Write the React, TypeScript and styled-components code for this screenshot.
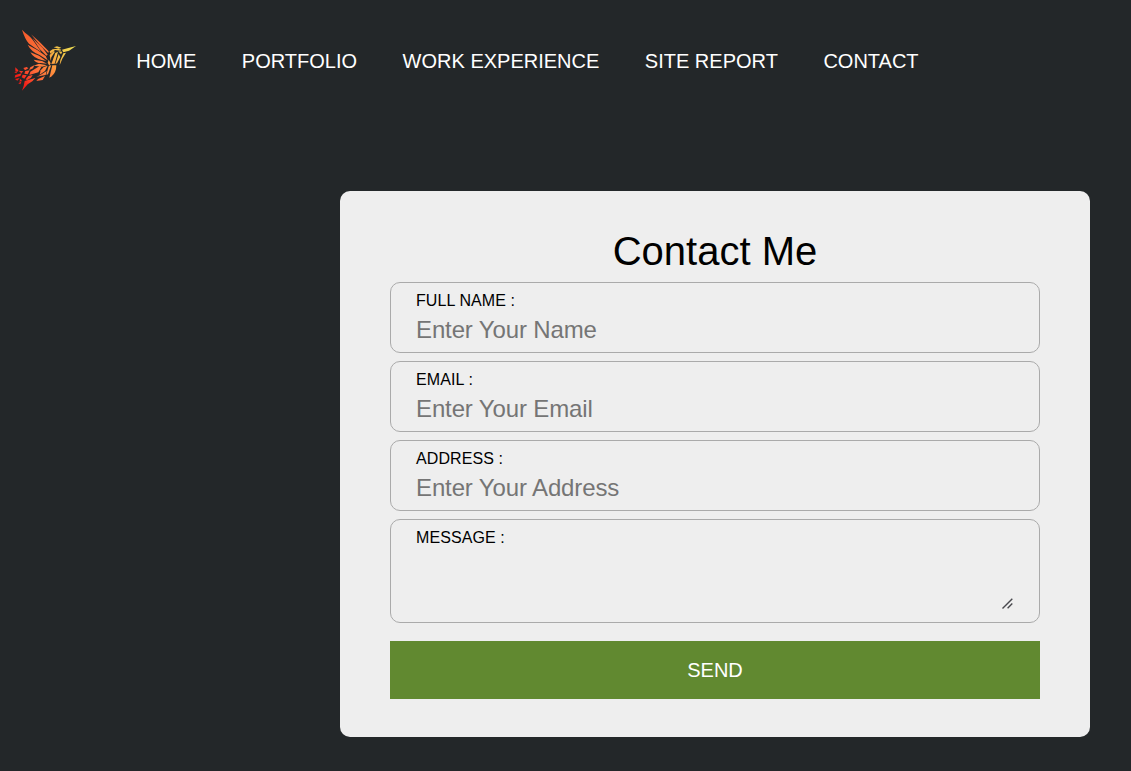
import React from "react";
import styled, { createGlobalStyle } from "styled-components";

const GlobalStyle = createGlobalStyle`
  * { box-sizing: border-box; }
  body {
    margin: 0;
    background: #232729;
    font-family: "Liberation Sans", Arial, sans-serif;
    overflow: hidden;
  }
`;

const Page = styled.div`
  min-height: 771px;
  background: #232729;
`;

const Header = styled.header`
  display: flex;
  align-items: center;
  height: 120px;
`;

const Logo = styled.svg`
  display: block;
  width: 90px;
  height: 80px;
  flex: none;
`;

const Nav = styled.nav`
  display: flex;
  gap: 45.56px;
  margin-left: 46.3px;
  padding-top: 3px;
`;

const NavLink = styled.a`
  color: #fff;
  font-size: 20px;
  line-height: 23px;
  text-decoration: none;
  text-transform: uppercase;
  white-space: nowrap;
`;

const Card = styled.form`
  width: 750px;
  height: 546px;
  margin: 71px 0 0 340px;
  padding: 37px 50px 0;
  background: #eee;
  border-radius: 10px;
`;

const Title = styled.h1`
  margin: 0 0 8px;
  color: #000;
  font-size: 40px;
  font-weight: 400;
  line-height: 46px;
  text-align: center;
`;

const Field = styled.div<{ $tall?: boolean }>`
  position: relative;
  display: flex;
  flex-direction: column;
  height: ${(p) => (p.$tall ? 104 : 71)}px;
  margin-bottom: 8px;
  padding: 9px 25px 0;
  border: 1px solid #aaa;
  border-radius: 10px;
`;

const Label = styled.label`
  color: #000;
  font-size: 16px;
  line-height: 18px;
  letter-spacing: 0.09px;
  text-transform: uppercase;
`;

const Input = styled.input`
  width: 100%;
  height: 28px;
  margin-top: 6px;
  padding: 0;
  border: 0;
  outline: 0;
  background: transparent;
  font-family: inherit;
  font-size: 24px;
  letter-spacing: -0.13px;
  &::placeholder { color: #757575; }
`;

const TextArea = styled.textarea`
  display: block;
  width: 100%;
  height: 56px;
  margin-top: 6px;
  padding: 0;
  border: 0;
  outline: 0;
  resize: none;
  background: transparent;
  font-family: inherit;
  font-size: 24px;
`;

const ResizeGrip = styled.svg`
  position: absolute;
  right: 26px;
  bottom: 13px;
  width: 11px;
  height: 11px;
  pointer-events: none;
`;

const SendButton = styled.button`
  display: block;
  width: 100%;
  height: 58px;
  margin-top: 18px;
  padding: 0;
  border: 0;
  background: #618930;
  color: #fff;
  font-family: inherit;
  font-size: 20px;
  text-transform: uppercase;
`;

const links = ["Home", "Portfolio", "Work Experience", "Site Report", "Contact"];

const fields = [
  { id: "name", label: "Full Name :", placeholder: "Enter Your Name" },
  { id: "email", label: "Email :", placeholder: "Enter Your Email" },
  { id: "address", label: "Address :", placeholder: "Enter Your Address" },
];

function Hummingbird() {
  return (
    <Logo viewBox="0 0 270 240" aria-label="Hummingbird">
      <defs>
        <linearGradient id="plumage" gradientUnits="userSpaceOnUse" x1="50" y1="200" x2="215" y2="85">
          <stop offset="0" stopColor="#f30d0d" />
          <stop offset="0.14" stopColor="#f5261b" />
          <stop offset="0.34" stopColor="#ff6838" />
          <stop offset="0.55" stopColor="#ff8a3c" />
          <stop offset="0.78" stopColor="#f5bd45" />
          <stop offset="1" stopColor="#f0dc52" />
        </linearGradient>
        <linearGradient id="wing" gradientUnits="userSpaceOnUse" x1="68" y1="30" x2="140" y2="135">
          <stop offset="0" stopColor="#f65a2c" />
          <stop offset="1" stopColor="#ff7a3c" />
        </linearGradient>
      </defs>
      <g fill="url(#wing)">
        <path d="M66 29 C78 42 91 48 99 61 L124 96 Q104 83 87 71 Q75 58 66 29Z" />
        <path d="M93 43 L119 66 L146 94 L145 99 L119 74Z" />
        <path d="M98 55 L128 84 L143 104 L139 107 L119 87Z" />
        <path d="M83 74 L113 91 L137 108 L143 121 L119 105 Q93 95 83 74Z" />
        <path d="M91 97 L117 107 L139 123 L125 120 Q101 115 91 97Z" />
        <path d="M101 119 L126 123 L141 131 L122 129 Q108 129 101 119Z" />
      </g>
      <g fill="url(#plumage)">
        <path d="M101 137 L117 131 L141 136 L126 140Z" />
        <path d="M91 155 L119 138 L124 141 L115 157 L88 165Z" />
        <path d="M131 141 L143 137 L135 153 L119 164 L122 151Z" />
        <path d="M120 166 L140 153 L137 165 L109 170Z" />
        <path d="M146 139 L154 135 L144 163 L139 164Z" />
        <path d="M157 136 L169 136 Q169 157 155 169 L148 173Z" />
        <path d="M146 119 L152 130 L148 137 L143 128Z" />
        <path d="M149 105 L162 92 L164 97 L154 112 L152 123Z" />
        <path d="M166 99 L174 95 L164 131 L154 132Z" />
        <path d="M176 102 L181 111 L171 130 L166 132Z" />
        <path d="M149 94 L158 88 L174 86 L184 89 L181 92 L165 90 L151 101Z" />
        <path d="M161 82 L171 79 L184 83 L176 86Z" />
        <path d="M175 94 L187 95 L183 103Z" />
        <path d="M186 89 L205 84 L228 78 L207 92 L190 97Z" />
        <path d="M190 100 L198 98 L187 116 L179 136 L181 120Z" />
        <path d="M114 177 L135 168 L128 180 L109 183Z" />
        <path d="M91 142 L103 136 L99 145 L87 151Z" />
        <path d="M46 142 L55 151 L54 155 L46 152Z" />
        <path d="M43 157 L50 153 L50 160Z" />
        <path d="M56 152 L70 154 L64 160Z" />
        <path d="M70 144 L80 141 L85 145 L75 151Z" />
        <path d="M76 153 L89 151 L83 163 L73 161Z" />
        <path d="M46 165 L65 160 L61 168 L44 173Z" />
        <path d="M68 164 L80 166 L73 176 L65 172Z" />
        <path d="M45 177 L59 174 L52 182Z" />
        <path d="M60 177 L66 181 L59 186Z" />
        <path d="M55 190 L65 184 L61 193Z" />
        <path d="M85 168 L98 165 L93 173 L81 181 L77 178Z" />
        <path d="M74 183 L106 174 L97 184 L83 193 L66 212 L71 198Z" />
      </g>
    </Logo>
  );
}

export default function App() {
  return (
    <Page>
      <GlobalStyle />
      <Header>
        <Hummingbird />
        <Nav>
          {links.map((link) => (
            <NavLink key={link}>{link}</NavLink>
          ))}
        </Nav>
      </Header>
      <Card>
        <Title>Contact Me</Title>
        {fields.map((f) => (
          <Field key={f.id}>
            <Label htmlFor={f.id}>{f.label}</Label>
            <Input id={f.id} placeholder={f.placeholder} />
          </Field>
        ))}
        <Field $tall>
          <Label htmlFor="message">Message :</Label>
          <TextArea id="message" />
          <ResizeGrip viewBox="0 0 11 11" stroke="#48484d" strokeWidth="1.4" fill="none">
            <path d="M0.5 10.5 L10.3 0.7 M5.6 10.3 L10.3 5.6" />
          </ResizeGrip>
        </Field>
        <SendButton type="button">Send</SendButton>
      </Card>
    </Page>
  );
}
